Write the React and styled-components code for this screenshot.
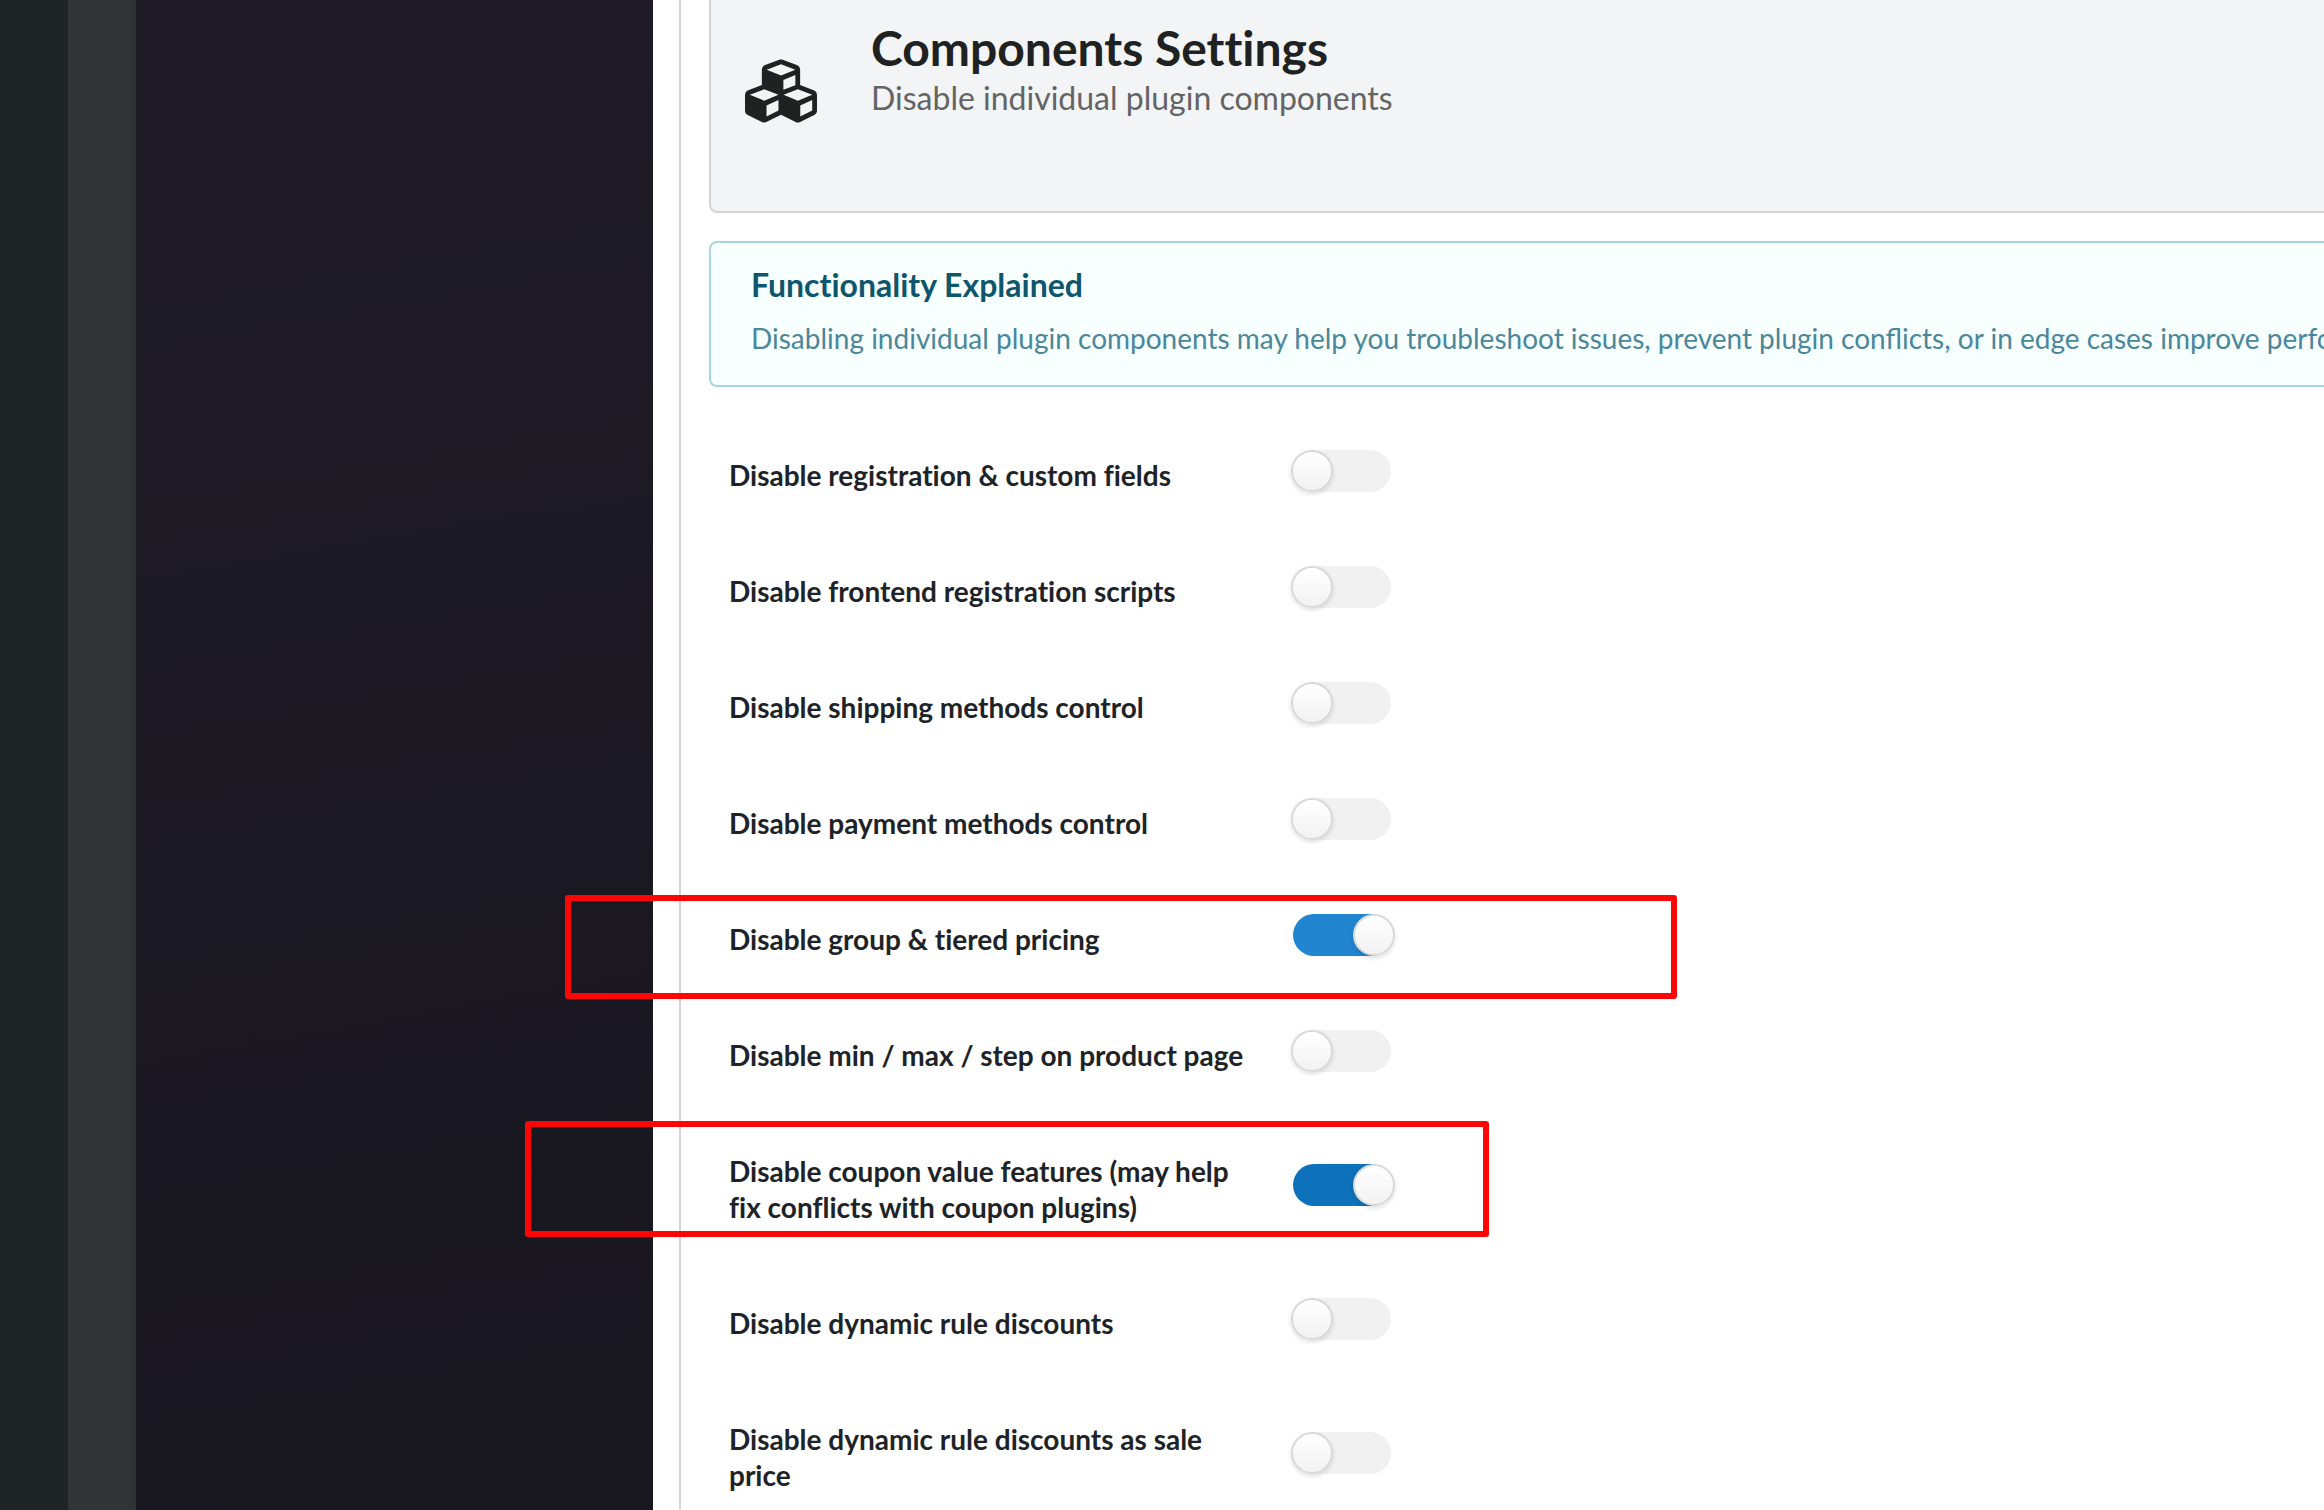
import React, { useState } from 'react';
import styled, { createGlobalStyle } from 'styled-components';
import { FaCubes } from 'react-icons/fa';

const GlobalStyle = createGlobalStyle`
  *, *::before, *::after {
    box-sizing: border-box;
  }
  body {
    margin: 0;
    background: #fff;
    font-family: Lato, "Open Sans", sans-serif;
    font-size: 28px;
  }
`;

const Page = styled.div`
  display: flex;
  height: 100vh;
  overflow: hidden;
`;

const AdminMenu = styled.aside`
  flex: 0 0 68px;
  background: #1f2427;
`;

const AdminGutter = styled.div`
  flex: 0 0 68px;
  background: linear-gradient(to left, #2e3233, #313537 10px);
`;

const PluginMenu = styled.nav`
  flex: 0 0 517px;
  background: linear-gradient(170deg, #1e1b26, #18161f);
`;

const Main = styled.main`
  flex: 1;
  min-width: 0;
  padding-left: 26px;
`;

const Segment = styled.div`
  min-height: 100%;
  padding-left: 28px;
  border-left: 2px solid #d4d4d5;
`;

const Header = styled.header`
  display: flex;
  align-items: flex-start;
  gap: 54px;
  height: 213px;
  padding: 18px 34px;
  background: #f3f4f5;
  border: 2px solid #d4d4d5;
  border-width: 0 0 2px 2px;
  border-radius: 0 0 0 8px;
  color: #202221;
  svg {
    flex: none;
    margin-top: 37px;
  }
  h1 {
    margin: 0;
    font-size: 48px;
    font-weight: 700;
    line-height: 60px;
    font-variant-ligatures: none;
  }
  p {
    margin: 0;
    color: #636465;
    font-size: 32px;
    line-height: 40px;
  }
`;

const Message = styled.section`
  margin-top: 28px;
  padding: 22px 40px 27px;
  background: #f8ffff;
  border: 2px solid #a9d5de;
  border-right: 0;
  border-radius: 8px 0 0 8px;
  white-space: nowrap;
  overflow: hidden;
  h2 {
    margin: 0;
    color: #0e566c;
    font-size: 32px;
    line-height: 40px;
    font-variant-ligatures: none;
  }
  p {
    margin: 13px 0 0;
    color: #4a879a;
    line-height: 40px;
  }
`;

const Form = styled.form`
  padding: 30px 0 0 20px;
`;

const Row = styled.div`
  position: relative;
  display: grid;
  grid-template-columns: 520px auto;
  column-gap: 44px;
  align-items: center;
  justify-content: start;
  padding: 40px 0;
  label {
    color: #1d2327;
    font-weight: 700;
    line-height: 36px;
    font-variant-ligatures: none;
  }
`;

const ToggleCell = styled.div`
  height: 36px;
  margin-top: -14px;
`;

const Toggle = styled.input`
  appearance: none;
  position: relative;
  display: block;
  width: 98px;
  height: 42px;
  margin: 0;
  border-radius: 21px;
  background: #f1f1f1;
  cursor: pointer;
  &::before {
    content: "";
    position: absolute;
    top: 0;
    left: -2px;
    width: 42px;
    height: 42px;
    border: 2px solid #d9d9d9;
    border-radius: 50%;
    background: linear-gradient(#fff, #f2f2f2);
    box-shadow: 0 2px 4px rgba(34, 36, 38, 0.15);
  }
  &:checked {
    background: ${props => props.$focused ? '#0d71bb' : '#2185d0'};
  }
  &:checked::before {
    left: 60px;
  }
`;

// red marker drawn over the row, reaching into the side menu
const Highlight = styled.span`
  position: absolute;
  top: ${props => props.$top}px;
  left: ${props => props.$left}px;
  width: ${props => props.$width}px;
  height: ${props => props.$height}px;
  border: 6px solid #ff0505;
  border-radius: 3px;
  pointer-events: none;
`;

const settings = [
  { id: 'registration', label: 'Disable registration & custom fields' },
  { id: 'scripts', label: 'Disable frontend registration scripts' },
  { id: 'shipping', label: 'Disable shipping methods control' },
  { id: 'payment', label: 'Disable payment methods control' },
  {
    id: 'pricing',
    label: 'Disable group & tiered pricing',
    enabled: true,
    mark: { top: 14, left: -164, width: 1112, height: 104 }
  },
  { id: 'minmax', label: 'Disable min / max / step on product page' },
  {
    id: 'coupon',
    label: 'Disable coupon value features (may help fix conflicts with coupon plugins)',
    enabled: true,
    focused: true,
    mark: { top: 8, left: -204, width: 964, height: 116 }
  },
  { id: 'dynamic', label: 'Disable dynamic rule discounts' },
  { id: 'saleprice', label: 'Disable dynamic rule discounts as sale price' }
];

const SettingRow = ({ setting }) => {
  const [checked, setChecked] = useState(!!setting.enabled);
  const { id, label, focused, mark } = setting;

  return (
    <Row>
      <label htmlFor={id}>{label}</label>
      <ToggleCell>
        <Toggle
          id={id}
          type="checkbox"
          $focused={focused}
          checked={checked}
          onChange={e => setChecked(e.target.checked)}
        />
      </ToggleCell>
      {mark && <Highlight $top={mark.top} $left={mark.left} $width={mark.width} $height={mark.height} />}
    </Row>
  );
};

const App = () => (
  <Page>
    <GlobalStyle />
    <AdminMenu />
    <AdminGutter />
    <PluginMenu />
    <Main>
      <Segment>
        <Header>
          <FaCubes size={72} />
          <div>
            <h1>Components Settings</h1>
            <p>Disable individual plugin components</p>
          </div>
        </Header>
        <Message>
          <h2>Functionality Explained</h2>
          <p>Disabling individual plugin components may help you troubleshoot issues, prevent plugin conflicts, or in edge cases improve performance.</p>
        </Message>
        <Form>
          {settings.map(n => <SettingRow key={n.id} setting={n} />)}
        </Form>
      </Segment>
    </Main>
  </Page>
);

export default App;
